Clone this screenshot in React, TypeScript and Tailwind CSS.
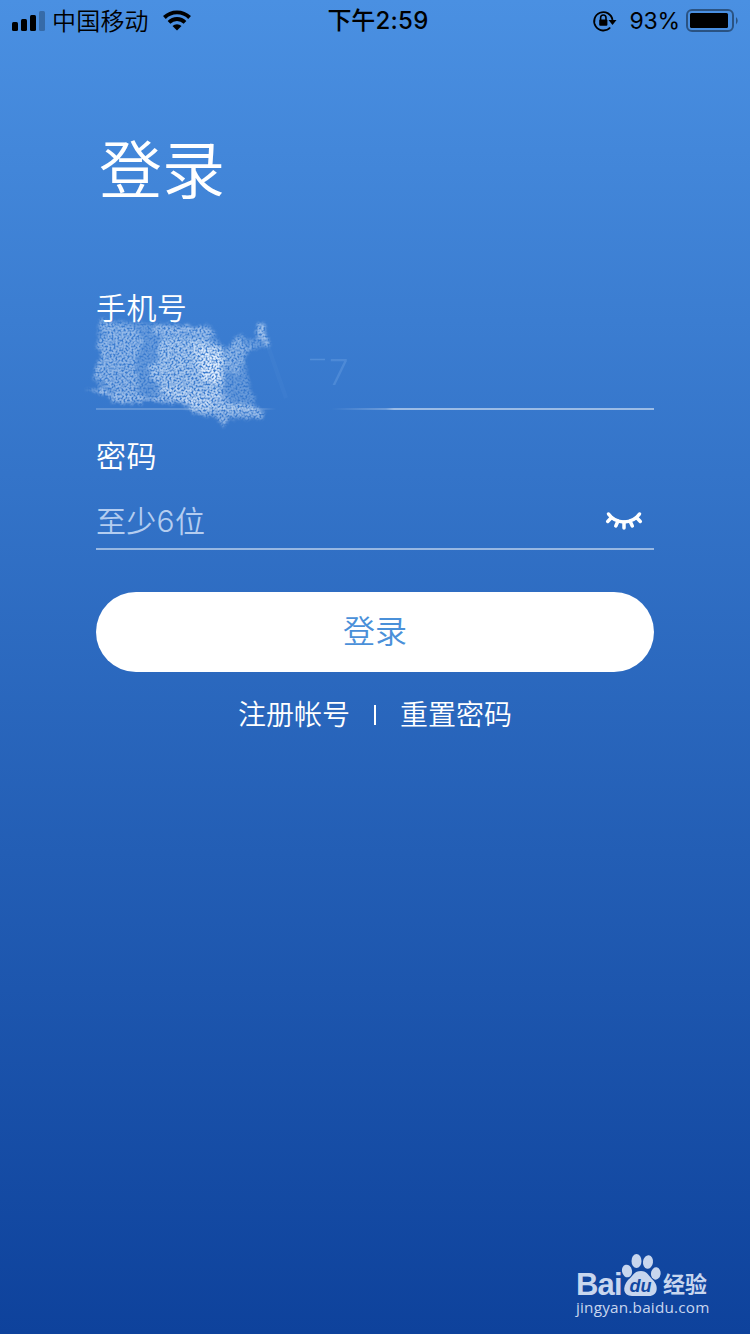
import React, { useState } from "react";

const StatusBar: React.FC = () => (
    <div className="grid h-[41px] grid-cols-[1fr_auto_1fr] items-center pl-3 pr-3 pt-px text-2xl leading-10 text-black">
        <div className="flex h-10 items-center">
            <svg className="mb-px h-5 w-[33px]" viewBox="0 0 33 20" fill="currentColor">
                <rect x="0" y="11" width="6" height="9" rx="1.5" />
                <rect x="9" y="8" width="6" height="12" rx="1.5" />
                <rect x="18" y="4" width="6" height="16" rx="1.5" />
                <rect x="27" y="0" width="6" height="20" rx="1.5" opacity="0.25" />
            </svg>
            <div className="ml-[7px] pt-px font-[350] tracking-[0.2px]">中国移动</div>
            <svg className="mb-px ml-3.5 h-[21px] w-[28px]" viewBox="0 0 28 21" fill="none" stroke="currentColor" strokeWidth="3.9">
                <path d="M1.4 7.5 A18 18 0 0 1 26.6 7.5" />
                <path d="M6 12.3 A11.5 11.5 0 0 1 22 12.3" />
                <path d="M14 20.5 L9.5 16 A6.5 6.5 0 0 1 18.5 16 Z" fill="currentColor" stroke="none" />
            </svg>
        </div>
        <div className="flex pl-1.5">
            <div className="font-medium">下午</div>
            <div className="font-['Inter','Liberation_Sans',sans-serif] text-[24px] font-medium tracking-[0.3px]">2:59</div>
        </div>
        <div className="-mr-3 flex h-10 items-center justify-end">
            <svg className="mb-px h-6 w-[26px]" viewBox="0 0 26 24" fill="none" stroke="currentColor" strokeWidth="1.8">
                <path d="M18.2 18.5 A9.2 9.2 0 1 1 20.5 11" />
                <path d="M16.5 11 H24.5 L20.5 16 Z" fill="currentColor" stroke="none" />
                <path d="M8.6 11 V8.7 A2.7 2.7 0 0 1 14 8.7 V11" strokeWidth="1.6" />
                <rect x="7.2" y="10.5" width="8.2" height="6.2" rx="1" fill="currentColor" stroke="none" />
            </svg>
            <div className="ml-3 font-['Inter','Liberation_Sans',sans-serif] text-[23px] tracking-[-0.2px]">93%</div>
            <svg className="ml-1.5 mr-2.5 h-6 w-[54px]" viewBox="0 0 54 24">
                <rect x="1" y="1" width="46" height="21" rx="5" fill="none" stroke="#000" strokeOpacity="0.42" strokeWidth="2" />
                <rect x="4" y="4" width="38" height="15" rx="1.5" fill="#000" />
                <path d="M50 8 Q53.5 11.5 50 15.5 Z" fill="#000" opacity="0.42" />
            </svg>
        </div>
    </div>
);

// chalk smear that hides the phone number
const Scribble: React.FC = () => (
    <svg className="pointer-events-none absolute left-[-16px] top-[-9px] h-[160px] w-[340px]" viewBox="0 0 340 160">
        <defs>
            <filter id="chalk" x="0" y="0" width="340" height="160" filterUnits="userSpaceOnUse" colorInterpolationFilters="sRGB">
                <feTurbulence type="fractalNoise" baseFrequency="0.2" numOctaves="3" seed="4" result="wave" />
                <feDisplacementMap in="SourceGraphic" in2="wave" scale="9" xChannelSelector="R" yChannelSelector="G" result="rough" />
                <feGaussianBlur in="rough" stdDeviation="1.5" result="soft" />
                <feTurbulence type="fractalNoise" baseFrequency="0.5" numOctaves="3" seed="9" result="grain" />
                <feColorMatrix in="grain" values="0 0 0 0 1  0 0 0 0 1  0 0 0 0 1  3.2 0 0 0 -0.9" result="dots" />
                <feComposite in="soft" in2="dots" operator="in" />
            </filter>
        </defs>
        <g filter="url(#chalk)" fill="#eaf3ff">
            <path d="M18 40 L122 46 L134 52 L134 58 L148 70 L152 60 L160 54 L174 62 L178 42 L184 42 L190 66 L164 72 L166 92 L178 130 L112 132 L100 124 L26 115 L12 98 L20 78 Z" opacity="0.27" />
            <path d="M18 40 L30 44 L56 47 L62 62 L55 84 L60 116 L34 114 L26 104 L14 96 L16 84 L24 76 L17 68 L16 60 L26 56 Z" opacity="0.32" />
            <path d="M72 46 L130 46 L136 55 L122 58 L120 56 L76 54 Z" opacity="0.4" />
            <path d="M82 56 L126 58 L142 68 L146 82 L142 120 L112 122 L76 112 L82 106 L70 100 L70 84 L80 82 L76 70 Z" opacity="0.5" />
            <path d="M112 62 L141 70 L142 102 L126 104 L116 90 Z" opacity="0.45" />
            <path d="M120 68 L140 76 L139 102 L122 98 Z" opacity="0.65" />
            <path d="M80 106 L146 112 L150 124 L110 126 L84 118 Z" opacity="0.3" />
            <path d="M110 122 L160 124 L184 130 L182 138 L150 139 L112 134 Z" opacity="0.5" />
            <path d="M177 43 L184 43 L190 66 L180 60 Z" opacity="0.45" />
            <path d="M144 74 L152 62 L160 58 L166 68 L175 66 L164 78 L158 96 L146 90 Z" opacity="0.28" />
            <path d="M5 110 L24 114 L36 123 L62 124 L62 120 L130 126 L130 122 L30 114 L24 108 Z M138 138 L148 138 L143 149 Z" opacity="0.55" />
        </g>
        <path d="M188 66 L206 118" stroke="#8ebcf2" strokeWidth="4" opacity="0.05" />
        <path d="M230 79.5 H245" stroke="#8ebcf2" strokeWidth="1.5" opacity="0.3" />
        <text x="249" y="105" fill="#8ebcf2" opacity="0.24" fontSize="35" fontWeight="300" fontFamily="Inter, sans-serif">7</text>
    </svg>
);

const ClosedEye: React.FC = () => (
    <svg className="h-[22px] w-10" viewBox="0 0 40 22" fill="none" stroke="#fff" strokeWidth="3.5" strokeLinecap="round">
        <path d="M4.5 4 C12 14.5 28 14.5 35.5 4" />
        <path d="M7.5 7.5 L3.7 11.5 M14 11 L11.8 16 M20 12 V18 M26 11 L28.3 16 M32.5 7.5 L36.3 11.5" />
    </svg>
);

const Watermark: React.FC = () => (
    <div className="ml-auto mr-[38px] w-[136px] text-[#c8d6ee]">
        <div className="flex h-[46px] items-end">
            <div className="w-[45px] font-['Liberation_Sans',sans-serif] text-[31px] font-bold leading-[28px] tracking-[-0.8px]">Bai</div>
            <svg className="mb-0.5 h-[44px] w-[40px]" viewBox="0 0 40 44" fill="currentColor">
                <ellipse cx="6" cy="18" rx="5" ry="6.4" transform="rotate(-12 6 18)" />
                <ellipse cx="15.5" cy="8" rx="5" ry="7" />
                <ellipse cx="27" cy="9" rx="5" ry="6.8" transform="rotate(8 27 9)" />
                <ellipse cx="34.8" cy="20.5" rx="4.8" ry="6.2" transform="rotate(8 34.8 20.5)" />
                <path d="M20 18 C26 18 28 23 32 27 C38 33 37 43 28 43 H11 C2 43 1 34 7 27 C12 23 13 18 20 18 Z" />
                <text x="19.5" y="39" textAnchor="middle" fill="#1148a2" fontSize="18" fontWeight="700" fontStyle="italic" fontFamily="Liberation Sans, sans-serif">du</text>
            </svg>
            <div className="ml-0.5 text-[22px] font-bold leading-[28px]">经验</div>
        </div>
        <div className="font-['Open_Sans',sans-serif] text-[15.3px] font-medium leading-[17px] tracking-[0.2px] whitespace-nowrap">jingyan.baidu.com</div>
    </div>
);

const App: React.FC = () => {
    const [password, setPassword] = useState("");

    return (
        <div className="flex h-[1334px] w-[750px] flex-col overflow-hidden bg-linear-to-b from-[#4a90e2] to-[#0e429c] font-['Liberation_Sans','Noto_Sans_CJK_SC',sans-serif] text-white">
            <StatusBar />
            <div className="flex flex-col px-24">
                <h1 className="ml-[3px] mt-[82px] text-[63px] font-[350] leading-[96px]">登录</h1>

                <div className="relative mt-[70px]">
                    <div className="text-[30px] font-[350] leading-10 tracking-[0.4px]">手机号</div>
                    <div className="h-[79px]" />
                    <div className="h-0.5 bg-[linear-gradient(to_right,#ffffff33_0,#ffffff33_160px,transparent_180px,transparent_235px,#ffffff44_290px,#ffffff80_298px)]" />
                    <Scribble />
                </div>

                <div className="mt-[27px] text-[30px] font-[350] leading-10 tracking-[0.4px]">密码</div>
                <div className="flex h-[73px] items-center justify-between border-b-2 border-white/50 pr-2.5 pt-4">
                    <input
                        className="w-96 bg-transparent font-['Inter','Noto_Sans_CJK_SC',sans-serif] text-[30px] font-[350] leading-10 tracking-[0.3px] outline-none placeholder:text-[#b4cdf0]"
                        placeholder="至少6位"
                        type="password"
                        value={password}
                        onChange={e => setPassword(e.target.value)}
                    />
                    <ClosedEye />
                </div>

                <button className="mt-[42px] h-20 rounded-full bg-white text-[32px] font-[350] text-[#4a90d9]">登录</button>

                <div className="mt-6 flex items-center justify-center text-[28px] font-[350] leading-10">
                    <div>注册帐号</div>
                    <div className="mx-6 mb-0.5 h-5 w-0.5 bg-white" />
                    <div>重置密码</div>
                </div>
            </div>
            <div className="mt-auto pb-[18px]">
                <Watermark />
            </div>
        </div>
    );
}
export default App;
